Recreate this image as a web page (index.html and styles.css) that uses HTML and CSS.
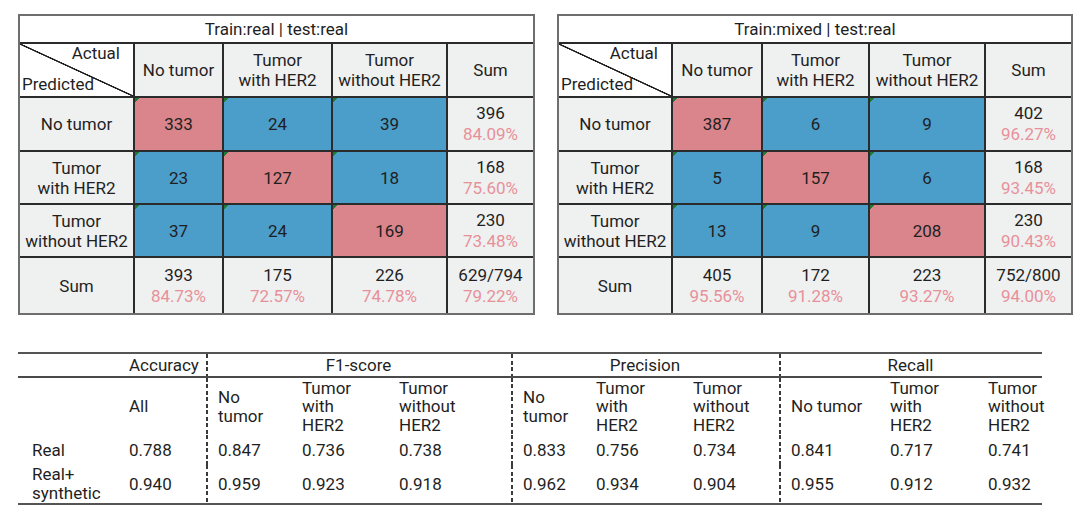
FILE: index.html
```html
<!DOCTYPE html>
<html lang="en">
<head>
<meta charset="utf-8">
<title>Confusion matrices</title>
<link rel="stylesheet" href="styles.css">
</head>
<body>
<main class="page">
  <div class="top">
    <section class="cm cm-left">
      <div class="cm-title">Train:real | test:real</div>
      <div class="corner"><span class="actual">Actual</span><span class="pred">Predicted</span></div>
      <div class="hd">No tumor</div>
      <div class="hd">Tumor<br>with HER2</div>
      <div class="hd">Tumor<br>without HER2</div>
      <div class="hd">Sum</div>

      <div class="hd">No tumor</div>
      <div class="val pink">333</div>
      <div class="val blue">24</div>
      <div class="val blue">39</div>
      <div class="hd sum">396<span class="pct">84.09%</span></div>

      <div class="hd">Tumor<br>with HER2</div>
      <div class="val blue">23</div>
      <div class="val pink">127</div>
      <div class="val blue">18</div>
      <div class="hd sum">168<span class="pct">75.60%</span></div>

      <div class="hd">Tumor<br>without HER2</div>
      <div class="val blue">37</div>
      <div class="val blue">24</div>
      <div class="val pink">169</div>
      <div class="hd sum">230<span class="pct">73.48%</span></div>

      <div class="hd">Sum</div>
      <div class="hd sum">393<span class="pct">84.73%</span></div>
      <div class="hd sum">175<span class="pct">72.57%</span></div>
      <div class="hd sum">226<span class="pct">74.78%</span></div>
      <div class="hd sum">629/794<span class="pct">79.22%</span></div>
    </section>

    <section class="cm cm-right">
      <div class="cm-title">Train:mixed | test:real</div>
      <div class="corner"><span class="actual">Actual</span><span class="pred">Predicted</span></div>
      <div class="hd">No tumor</div>
      <div class="hd">Tumor<br>with HER2</div>
      <div class="hd">Tumor<br>without HER2</div>
      <div class="hd">Sum</div>

      <div class="hd">No tumor</div>
      <div class="val pink">387</div>
      <div class="val blue">6</div>
      <div class="val blue">9</div>
      <div class="hd sum">402<span class="pct">96.27%</span></div>

      <div class="hd">Tumor<br>with HER2</div>
      <div class="val blue">5</div>
      <div class="val pink">157</div>
      <div class="val blue">6</div>
      <div class="hd sum">168<span class="pct">93.45%</span></div>

      <div class="hd">Tumor<br>without HER2</div>
      <div class="val blue">13</div>
      <div class="val blue">9</div>
      <div class="val pink">208</div>
      <div class="hd sum">230<span class="pct">90.43%</span></div>

      <div class="hd">Sum</div>
      <div class="hd sum">405<span class="pct">95.56%</span></div>
      <div class="hd sum">172<span class="pct">91.28%</span></div>
      <div class="hd sum">223<span class="pct">93.27%</span></div>
      <div class="hd sum">752/800<span class="pct">94.00%</span></div>
    </section>
  </div>

  <table class="metrics">
    <colgroup>
      <col class="c99"><col class="c89"><col class="c84"><col class="c97"><col class="c124">
      <col class="c73"><col class="c97"><col class="c98"><col class="c99"><col class="c98"><col class="c66">
    </colgroup>
    <tr class="h1">
      <td class="lbl"></td>
      <td>Accuracy</td>
      <td class="grp sep" colspan="3">F1-score</td>
      <td class="grp sep" colspan="3">Precision</td>
      <td class="grp sep" colspan="3">Recall</td>
    </tr>
    <tr class="h2">
      <td class="lbl"></td>
      <td>All</td>
      <td class="sep">No<br>tumor</td>
      <td>Tumor<br>with<br>HER2</td>
      <td>Tumor<br>without<br>HER2</td>
      <td class="sep">No<br>tumor</td>
      <td>Tumor<br>with<br>HER2</td>
      <td>Tumor<br>without<br>HER2</td>
      <td class="sep">No tumor</td>
      <td>Tumor<br>with<br>HER2</td>
      <td>Tumor<br>without<br>HER2</td>
    </tr>
    <tr class="r1">
      <td class="lbl">Real</td>
      <td>0.788</td>
      <td class="sep">0.847</td>
      <td>0.736</td>
      <td>0.738</td>
      <td class="sep">0.833</td>
      <td>0.756</td>
      <td>0.734</td>
      <td class="sep">0.841</td>
      <td>0.717</td>
      <td>0.741</td>
    </tr>
    <tr class="r2">
      <td class="lbl">Real+<br>synthetic</td>
      <td>0.940</td>
      <td class="sep">0.959</td>
      <td>0.923</td>
      <td>0.918</td>
      <td class="sep">0.962</td>
      <td>0.934</td>
      <td>0.904</td>
      <td class="sep">0.955</td>
      <td>0.912</td>
      <td>0.932</td>
    </tr>
  </table>
</main>
</body>
</html>
```

FILE: styles.css
```css
* { box-sizing: border-box; }

html, body {
  margin: 0;
  padding: 0;
  background: #ffffff;
}

body {
  font-family: Roboto, "Liberation Sans", sans-serif;
  font-size: 17px;
  color: #1f1f1f;
}

.page {
  padding: 14px 0 0 18px;
}

.top {
  display: flex;
  gap: 22px;
  align-items: flex-start;
}

/* confusion matrix */
.cm {
  display: grid;
  gap: 2px;
  background: #2b2b2b;
  border: 2px solid #6e6e6e;
  grid-template-rows: 26px 52px 52px 51px 51px 55px;
}

.cm-left { grid-template-columns: 113px 87px 107px 113px 85px; }
.cm-right { grid-template-columns: 112px 88px 105px 114px 85px; }

.cm-title {
  grid-column: 1 / -1;
  background: #ffffff;
  display: flex;
  align-items: center;
  justify-content: center;
  line-height: 20px;
  padding-bottom: 1px;
}

.corner {
  background: #ffffff linear-gradient(to top right, transparent calc(50% - 1px), #1e1e1e calc(50% - 0.5px), #1e1e1e calc(50% + 0.5px), transparent calc(50% + 1px));
  display: flex;
  flex-direction: column;
  justify-content: space-between;
  padding: 0 13px 3px 2px;
  line-height: 18px;
}

.corner .actual { align-self: flex-end; }
.corner .pred { align-self: flex-start; }

.hd, .val {
  display: flex;
  flex-direction: column;
  align-items: center;
  justify-content: center;
  text-align: center;
  line-height: 20px;
}

.hd { background: #eff0f0; }

.sum { line-height: 21px; }

.pct { color: #e8909a; }

.val.pink {
  background: linear-gradient(135deg, #1f7a34 0 3.5px, transparent 3.5px), #d9858b;
}

.val.blue {
  background: linear-gradient(135deg, #1f7a34 0 3.5px, transparent 3.5px), #4b9dca;
}

/* metrics table */
.metrics {
  margin-top: 37px;
  width: 1024px;
  table-layout: fixed;
  border-collapse: collapse;
  border-top: 2px solid #555555;
  border-bottom: 2px solid #555555;
}

.c99 { width: 99px; }
.c89 { width: 89px; }
.c84 { width: 84px; }
.c97 { width: 97px; }
.c124 { width: 124px; }
.c73 { width: 73px; }
.c98 { width: 98px; }
.c66 { width: 66px; }

.metrics td {
  padding: 0 0 0 12px;
  text-align: left;
  vertical-align: middle;
  white-space: nowrap;
}

.metrics .lbl { padding-left: 14px; }

.metrics .grp {
  text-align: center;
  padding-left: 0;
}

.metrics .sep {
  background: repeating-linear-gradient(to bottom, #3a3a3a 0 4px, transparent 4px 6.5px) left top / 2px 100% no-repeat;
}

.metrics .h1 td {
  height: 22px;
  line-height: 22px;
  border-bottom: 2px solid #4a4a4a;
}

.metrics .h2 td {
  height: 58px;
  line-height: 18.5px;
}

.metrics .r1 td {
  height: 30px;
  line-height: 20px;
}

.metrics .r2 td {
  height: 39px;
  line-height: 19px;
}
```
